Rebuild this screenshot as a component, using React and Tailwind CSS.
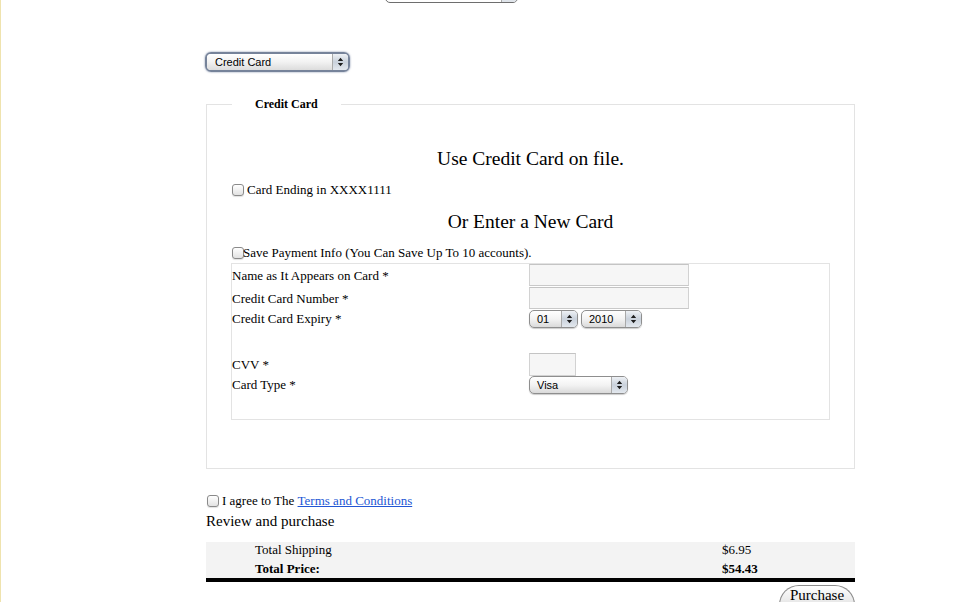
function Arrows() {
  return (
    <svg width="7" height="10" viewBox="0 0 7 10">
      <path d="M3.5 0.8 L6.2 4 L0.8 4 Z M0.8 6 L6.2 6 L3.5 9.2 Z" fill="#1e1e1e" />
    </svg>
  );
}

function AquaSelect({ label, className }) {
  return (
    <div
      className={`flex h-[18px] overflow-hidden rounded-[5px] border border-[#8e8e8e] bg-gradient-to-b from-white via-[#f3f3f3] to-[#dadada] shadow-[0_1px_1px_rgba(0,0,0,0.2)] ${className}`}
    >
      <span className="flex-1 pl-[7px] font-['Liberation_Sans',Arial,sans-serif] text-[11px] leading-[16px] text-black">
        {label}
      </span>
      <span className="flex w-[16px] items-center justify-center border-l border-[#a9a9a9] bg-gradient-to-b from-[#eef1f5] via-[#c9d1db] to-[#e3e8ee]">
        <Arrows />
      </span>
    </div>
  );
}

function Box({ className }) {
  return (
    <span
      className={`inline-block h-[12px] w-[12px] shrink-0 rounded-[3px] border border-[#8a8a8a] bg-gradient-to-b from-white to-[#e2e2e2] shadow-[0_1px_1px_rgba(0,0,0,0.12)] ${className}`}
    />
  );
}

export default function App() {
  return (
    <div className="min-h-screen border-l border-[#efe3ae] bg-white font-['Liberation_Serif','Times_New_Roman',serif] text-black">
      <div className="ml-[205px] w-[649px]">
        {/* cut-off select at the very top */}
        <div className="h-[3px] overflow-hidden">
          <div className="-mt-[15px] ml-[179px] flex h-[18px] w-[133px] justify-end overflow-hidden rounded-[5px] border border-[#6e6e6e] bg-white">
            <span className="w-[16px] border-l border-[#a9a9a9] bg-[#dfe4ea]" />
          </div>
        </div>

        {/* payment method select (focused) */}
        <div className="mt-[49px] -ml-[1px] w-[145px] rounded-[6px] border-2 border-[#76839a] shadow-[0_0_2px_rgba(80,100,140,0.8)]">
          <div className="flex h-[16px] overflow-hidden rounded-[4px] bg-gradient-to-b from-white via-[#f2f2f2] to-[#dcdcdc]">
            <span className="flex-1 pl-[8px] font-['Liberation_Sans',Arial,sans-serif] text-[11px] leading-[16px]">
              Credit Card
            </span>
            <span className="flex w-[16px] items-center justify-center border-l border-[#a9a9a9] bg-gradient-to-b from-[#eef1f5] via-[#c9d1db] to-[#e3e8ee]">
              <Arrows />
            </span>
          </div>
        </div>

        <fieldset className="mt-[24px] border border-[#e3e3e3] px-[24px] pb-[48px]">
          <legend className="ml-[1px] px-[23px] text-[12px] font-bold leading-[16px]">Credit Card</legend>

          <div className="mt-[35px] text-center text-[19.5px] leading-[24px]">Use Credit Card on file.</div>

          <label className="mt-[11px] flex h-[16px] items-center text-[13px]">
            <Box className="ml-[1px] mr-[3px]" />
            Card Ending in XXXX1111
          </label>

          <div className="mt-[12px] text-center text-[19.5px] leading-[24px]">Or Enter a New Card</div>

          <label className="mt-[11px] flex h-[16px] items-center text-[13px]">
            <Box className="ml-[1px] -mr-[1px]" />
            Save Payment Info (You Can Save Up To 10 accounts).
          </label>

          <div className="mt-[2px] border border-[#e3e3e3] pb-[25px] text-[13px]">
            <div className="flex h-[23px]">
              <div className="flex w-[297px] items-center">Name as It Appears on Card *</div>
              <div className="h-[22px] w-[160px] border border-[#d2d2d2] border-t-[#c4c4c4] border-b-[#c9c9c9] bg-[#f6f6f6]" />
            </div>
            <div className="flex h-[23px]">
              <div className="flex w-[297px] items-center">Credit Card Number *</div>
              <div className="h-[22px] w-[160px] border border-[#d2d2d2] border-t-[#c4c4c4] border-b-[#c9c9c9] bg-[#f6f6f6]" />
            </div>
            <div className="flex h-[43px]">
              <div className="w-[297px] leading-[18px]">Credit Card Expiry *</div>
              <div className="flex gap-[3px]">
                <AquaSelect label="01" className="w-[49px]" />
                <AquaSelect label="2010" className="w-[61px]" />
              </div>
            </div>
            <div className="flex h-[23px]">
              <div className="flex w-[297px] items-center">CVV *</div>
              <div className="h-[23px] w-[47px] border border-[#d2d2d2] border-t-[#c4c4c4] bg-[#f6f6f6]" />
            </div>
            <div className="flex h-[18px]">
              <div className="flex w-[297px] items-center">Card Type *</div>
              <AquaSelect label="Visa" className="w-[99px]" />
            </div>
          </div>
        </fieldset>

        <label className="mt-[24px] flex h-[16px] items-center text-[13px]">
          <Box className="ml-[1px] mr-[3px]" />
          I agree to The&nbsp;
          <a href="#" className="text-[#2256d4] underline">
            Terms and Conditions
          </a>
        </label>

        <div className="mt-[3px] text-[15px] leading-[18px]">Review and purchase</div>

        <div className="mt-[12px] bg-[#f3f3f3] pb-[2px] text-[13px]">
          <div className="flex h-[15px] items-center leading-[15px]">
            <span className="w-[516px] pl-[49px]">Total Shipping</span>
            <span>$6.95</span>
          </div>
          <div className="mt-[4px] flex h-[15px] items-center font-bold leading-[15px]">
            <span className="w-[516px] pl-[49px]">Total Price:</span>
            <span>$54.43</span>
          </div>
        </div>
        <div className="h-[4px] bg-black" />

        <div className="mt-[3px] flex justify-end">
          <button
            type="button"
            className="h-[20px] w-[76px] rounded-t-full border border-b-0 border-[#8c8c8c] bg-gradient-to-b from-white to-[#e4e4e4] text-[15px] leading-[17px] text-black"
          >
            Purchase
          </button>
        </div>
      </div>
    </div>
  );
}
